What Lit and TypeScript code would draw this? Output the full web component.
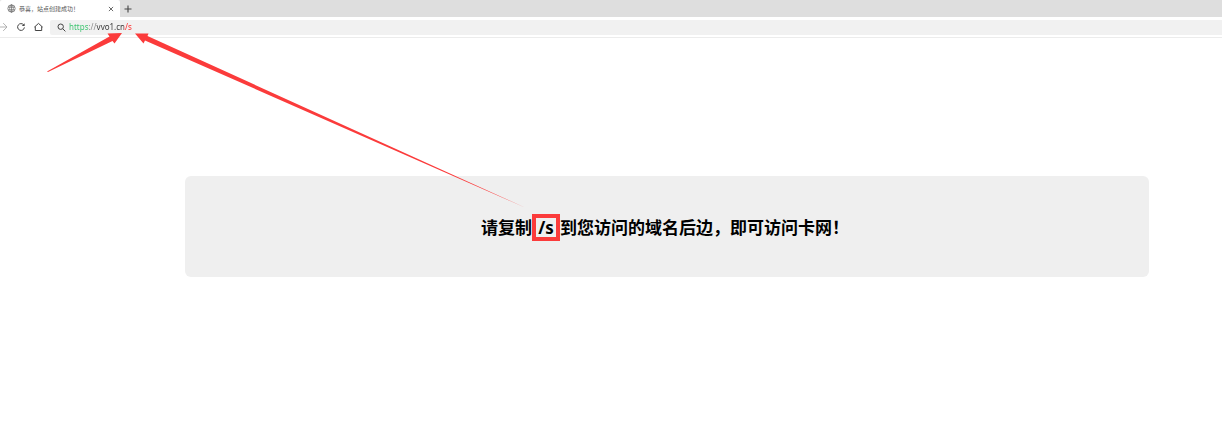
import { LitElement, html, css } from "lit";
import { customElement, state } from "lit/decorators.js";

@customElement("browser-chrome")
export class BrowserChrome extends LitElement {
  static styles = css`
    :host {
      display: block;
      font-family: "Noto Sans", "Noto Sans CJK SC", sans-serif;
    }
    button {
      display: flex;
      align-items: center;
      justify-content: center;
      padding: 0;
      border: 0;
      background: none;
      color: #444;
    }
    svg {
      display: block;
      fill: none;
      stroke: currentColor;
    }
    .tabs {
      display: flex;
      height: 17px;
      background: #dedede;
    }
    .tab {
      box-sizing: border-box;
      display: flex;
      align-items: center;
      width: 120px;
      padding: 0 5px 0 7px;
      gap: 3px;
      background: #fff;
      border-radius: 2px 2px 0 0;
      color: #555;
    }
    .title {
      flex: 1;
      font: 6px/16px "Noto Sans CJK SC", sans-serif;
      white-space: nowrap;
    }
    .tab button {
      width: 8px;
      height: 16px;
    }
    .add {
      width: 16px;
    }
    .toolbar {
      display: flex;
      align-items: center;
      height: 20px;
      border-bottom: 1px solid #ececec;
      background: #fff;
    }
    .nav {
      display: flex;
      align-items: center;
      gap: 8px;
      width: 50px;
    }
    .nav .forward {
      color: #aaa;
    }
    .address {
      flex: 1;
      display: flex;
      align-items: center;
      gap: 3px;
      height: 15px;
      padding-left: 7px;
      background: #f1f1f1;
      border-radius: 2px 0 0 2px;
      color: #444;
    }
    .url {
      box-sizing: border-box;
      flex: 1;
      min-width: 0;
      height: 15px;
      padding: 0 0 2px;
      border: 0;
      outline: 0;
      font: 8px/13px "Noto Sans", sans-serif;
      color: transparent;
      background: linear-gradient(
        90deg,
        #35c26a 20px,
        #888 20px 27px,
        #333 27px 55px,
        #f22 55px
      );
      -webkit-background-clip: text;
      background-clip: text;
    }
  `;

  @state() private url = "https://vvo1.cn/s";

  render() {
    return html`
      <div class="tabs">
        <div class="tab">
          <svg width="9" height="9" viewBox="0 0 9 9" stroke-width=".6">
            <circle cx="4.5" cy="4.5" r="3.7" />
            <ellipse cx="4.5" cy="4.5" rx="1.8" ry="3.7" />
            <path d="M1.2 3.2h6.6M1.2 5.8h6.6M4.5 .8v7.4" />
          </svg>
          <span class="title">恭喜，站点创建成功！</span>
          <button aria-label="关闭标签页">
            <svg width="6" height="6" viewBox="0 0 6 6" stroke-width=".8">
              <path d="M.9 .9l4.2 4.2M5.1 .9L.9 5.1" />
            </svg>
          </button>
        </div>
        <button class="add" aria-label="新建标签页">
          <svg width="8" height="8" viewBox="0 0 8 8" stroke-width="1.1">
            <path d="M4 .5v7M.5 4h7" />
          </svg>
        </button>
      </div>
      <div class="toolbar">
        <nav class="nav">
          <button class="forward" aria-label="前进">
            <svg width="8" height="10" viewBox="0 0 8 10" stroke-width=".9">
              <path d="M0 5h7M3.2 1.1L7 5 3.2 8.9" />
            </svg>
          </button>
          <button aria-label="刷新">
            <svg width="10" height="10" viewBox="0 0 10 10">
              <path d="M7.6 2.8A3.4 3.4 0 1 0 8.4 5.4" stroke-width="1" />
              <path d="M8.6 1.2v2.8H5.8z" fill="currentColor" stroke="none" />
            </svg>
          </button>
          <button aria-label="主页">
            <svg width="9" height="10" viewBox="0 0 9 10" stroke-width="1">
              <path d="M1.3 8.5V4.3L4.5 1.4l3.2 2.9v4.2z" stroke-linejoin="round" />
              <path d="M.4 5.1l.9-.8M8.6 5.1l-.9-.8" />
            </svg>
          </button>
        </nav>
        <label class="address">
          <svg width="9" height="9" viewBox="0 0 9 9" stroke-width="1">
            <circle cx="3.7" cy="3.7" r="2.7" />
            <path d="M5.7 5.7l2.7 2.7" />
          </svg>
          <input class="url" aria-label="地址" spellcheck="false" .value=${this.url} />
        </label>
      </div>
    `;
  }
}

@customElement("app-root")
export class AppRoot extends LitElement {
  static styles = css`
    :host {
      display: block;
      position: relative;
      min-height: 100vh;
      background: #fff;
    }
    .page {
      padding: 138px 73px 0 185px;
    }
    .card {
      display: flex;
      justify-content: center;
      align-items: center;
      padding: 38px 20px 36px 16px;
      border-radius: 6px;
      background: #efefef;
    }
    .message {
      display: flex;
      align-items: center;
      margin: 0;
      font: bold 17px/26px "Noto Sans", "Noto Sans CJK SC", sans-serif;
      color: #000;
    }
    .path {
      box-sizing: border-box;
      width: 28px;
      height: 27px;
      border: 4px solid #fb3b3b;
      line-height: 19px;
      text-align: center;
    }
    .arrows {
      position: absolute;
      top: 0;
      left: 0;
      fill: #fb3b3b;
      pointer-events: none;
    }
  `;

  render() {
    return html`
      <browser-chrome></browser-chrome>
      <main class="page">
        <section class="card">
          <h1 class="message">
            <span>请复制</span><span class="path">/s</span><span>到您访问的域名后边，即可访问卡网！</span>
          </h1>
        </section>
      </main>
      <svg class="arrows" width="540" height="220" viewBox="0 0 540 220" aria-hidden="true">
        <path d="M122 33L107.500 33.500L109.500 36.500L47 71.500L48 72L112.500 41L114.500 43.500Z" />
        <path d="M135 33.500L143.500 43.500L145 40.500L526 208L147.500 36L148.500 33.500Z" />
      </svg>
    `;
  }
}
